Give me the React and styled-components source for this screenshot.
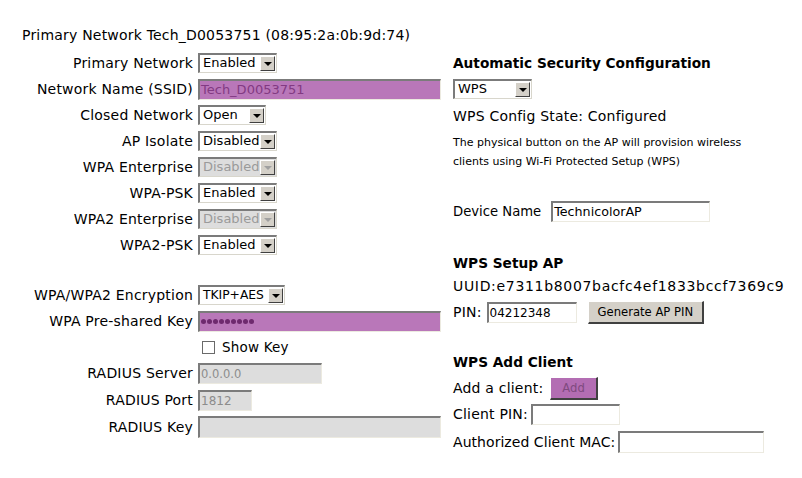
import React from "react";
import styled, { createGlobalStyle } from "styled-components";

const GlobalStyle = createGlobalStyle`
    html, body {
        margin: 0;
        padding: 0;
        background: #ffffff;
    }
    body {
        font-family: "DejaVu Sans", Verdana, sans-serif;
        font-size: 14px;
        letter-spacing: 0.2px;
        color: #000;
    }
`;

const Page = styled.div`
    width: 802px;
    height: 478px;
    display: flex;
    align-items: flex-start;
    padding-top: 22px;
    box-sizing: border-box;
    overflow: hidden;
`;

const LeftCol = styled.div`
    width: 453px;
    flex-shrink: 0;
`;

const Title = styled.div`
    height: 28px;
    line-height: 26px;
    padding-left: 22px;
`;

const FormGrid = styled.div`
    display: grid;
    grid-template-columns: 193px 1fr;
    grid-template-rows: repeat(8, 26px) 24px 26px 26px 26px 26px 28px 26px;
    column-gap: 5px;
`;

const Label = styled.div`
    display: flex;
    align-items: center;
    justify-content: flex-end;
    white-space: nowrap;
`;

const Cell = styled.div`
    display: flex;
    align-items: center;
`;

const Spacer = styled.div`
    grid-column: 1 / span 2;
`;

const SelectBox = styled.div`
    display: inline-flex;
    align-items: stretch;
    width: ${(p) => p.$w}px;
    height: 20px;
    box-sizing: border-box;
    border-style: solid;
    border-width: 2px 1px 1px 2px;
    border-color: #7b7b7b #d8d6cc #d8d6cc #7b7b7b;
    background: ${(p) => (p.$disabled ? "#dddddd" : "#ffffff")};
    color: ${(p) => (p.$disabled ? "#9a9a9a" : "#000000")};
    font-size: ${(p) => p.$fs || 13}px;
    letter-spacing: 0;
`;

const SelectText = styled.span`
    flex: 1;
    padding-left: 3px;
    line-height: 16px;
    white-space: nowrap;
    overflow: hidden;
`;

const Arrow = styled.span`
    width: 15px;
    margin: 1px 1px 1px 0;
    box-sizing: border-box;
    background: #d4d0c8;
    border-style: solid;
    border-width: 1px;
    border-color: #ffffff #404040 #404040 #ffffff;
    display: flex;
    align-items: center;
    justify-content: center;
    &::after {
        content: "";
        border-left: 4px solid transparent;
        border-right: 4px solid transparent;
        border-top: 4px solid ${(p) => (p.$disabled ? "#a0a0a0" : "#000000")};
        margin-top: 1px;
    }
`;

const Select = ({ w, value, disabled, fs }) => (
    <SelectBox $w={w} $disabled={disabled} $fs={fs}>
        <SelectText>{value}</SelectText>
        <Arrow $disabled={disabled} />
    </SelectBox>
);

const Field = styled.div`
    width: ${(p) => p.$w}px;
    height: ${(p) => p.$h || 21}px;
    box-sizing: border-box;
    border-style: solid;
    border-width: 2px 1px 1px 2px;
    border-color: #7b7b7b #eceae0 #eceae0 #7b7b7b;
    background: ${(p) =>
        p.$tone === "purple" ? "#b977b9" : p.$tone === "gray" ? "#dddddd" : "#ffffff"};
    color: ${(p) =>
        p.$tone === "purple" ? "#823a82" : p.$tone === "gray" ? "#8c8c8c" : "#000000"};
    font-size: ${(p) => p.$fs || 12}px;
    letter-spacing: ${(p) => p.$ls || 0}px;
    line-height: ${(p) => (p.$h || 21) - 3}px;
    padding-left: 1px;
    display: flex;
    align-items: center;
    gap: 1px;
    white-space: nowrap;
    overflow: hidden;
`;

const Dot = styled.span`
    width: 5px;
    height: 5px;
    border-radius: 50%;
    background: #6e2a6e;
    flex-shrink: 0;
`;

const CheckWrap = styled.div`
    display: flex;
    align-items: center;
    gap: 7px;
    padding-left: 4px;
    font-size: 13.5px;
`;

const CheckBox = styled.span`
    width: 11px;
    height: 11px;
    border: 1px solid #6a6a6a;
    background: #ffffff;
    display: inline-block;
`;

const RightCol = styled.div`
    display: flex;
    flex-direction: column;
    padding-top: 28px;
`;

const Line = styled.div`
    height: ${(p) => p.$h}px;
    margin-top: ${(p) => p.$mt || 0}px;
    display: flex;
    align-items: center;
    gap: ${(p) => p.$gap || 0}px;
    white-space: nowrap;
    font-size: ${(p) => p.$fs || 14}px;
    letter-spacing: ${(p) => (p.$ls !== undefined ? p.$ls : 0.2)}px;
    font-weight: ${(p) => (p.$bold ? 700 : 400)};
`;

const Button = styled.div`
    height: 23px;
    box-sizing: border-box;
    padding: 0 ${(p) => (p.$purple ? 11 : 9)}px;
    display: flex;
    align-items: center;
    font-size: 11.6px;
    letter-spacing: 0;
    border-style: solid;
    border-width: 1px 2px 2px 1px;
    border-color: #ffffff #404040 #404040 #ffffff;
    background: ${(p) => (p.$purple ? "#b36db3" : "#d4d0c8")};
    color: ${(p) => (p.$purple ? "#7f4a7f" : "#000000")};
    margin-left: ${(p) => p.$ml || 0}px;
`;

const leftRows = [
    { label: "Primary Network", el: <Select w={79} value="Enabled" /> },
    {
        label: "Network Name (SSID)",
        el: (
            <Field $w={243} $tone="purple" $fs={13}>
                Tech_D0053751
            </Field>
        ),
    },
    { label: "Closed Network", el: <Select w={68} value="Open" /> },
    { label: "AP Isolate", el: <Select w={79} value="Disabled" /> },
    { label: "WPA Enterprise", el: <Select w={79} value="Disabled" disabled /> },
    { label: "WPA-PSK", el: <Select w={79} value="Enabled" /> },
    { label: "WPA2 Enterprise", el: <Select w={79} value="Disabled" disabled /> },
    { label: "WPA2-PSK", el: <Select w={79} value="Enabled" /> },
];

const App = () => {
    return (
        <>
            <GlobalStyle />
            <Page>
                <LeftCol>
                    <Title>Primary Network Tech_D0053751 (08:95:2a:0b:9d:74)</Title>
                    <FormGrid>
                        {leftRows.map((r) => (
                            <React.Fragment key={r.label}>
                                <Label>{r.label}</Label>
                                <Cell>{r.el}</Cell>
                            </React.Fragment>
                        ))}
                        <Spacer />
                        <Label>WPA/WPA2 Encryption</Label>
                        <Cell>
                            <Select w={87} value="TKIP+AES" fs={12.3} />
                        </Cell>
                        <Label>WPA Pre-shared Key</Label>
                        <Cell>
                            <Field $w={243} $tone="purple">
                                {Array.from({ length: 9 }).map((_, i) => (
                                    <Dot key={i} />
                                ))}
                            </Field>
                        </Cell>
                        <Label />
                        <Cell>
                            <CheckWrap>
                                <CheckBox />
                                Show Key
                            </CheckWrap>
                        </Cell>
                        <Label>RADIUS Server</Label>
                        <Cell>
                            <Field $w={124} $tone="gray" $fs={11.5}>0.0.0.0</Field>
                        </Cell>
                        <Label>RADIUS Port</Label>
                        <Cell>
                            <Field $w={54} $tone="gray">1812</Field>
                        </Cell>
                        <Label>RADIUS Key</Label>
                        <Cell>
                            <Field $w={243} $tone="gray" $h={22} />
                        </Cell>
                    </FormGrid>
                </LeftCol>
                <RightCol>
                    <Line $h={26} $bold $fs={13.7} $ls={0}>
                        Automatic Security Configuration
                    </Line>
                    <Line $h={26}>
                        <Select w={79} value="WPS" />
                    </Line>
                    <Line $h={28}>WPS Config State: Configured</Line>
                    <Line $h={24} $fs={11} $ls={0}>
                        The physical button on the AP will provision wireless
                    </Line>
                    <Line $h={14} $fs={11} $ls={0}>
                        clients using Wi-Fi Protected Setup (WPS)
                    </Line>
                    <Line $h={26} $mt={30} $gap={10} $fs={13.2} $ls={0}>
                        Device Name
                        <Field $w={159} $fs={12.7}>TechnicolorAP</Field>
                    </Line>
                    <Line $h={26} $mt={26} $bold $fs={13.7} $ls={0}>
                        WPS Setup AP
                    </Line>
                    <Line $h={20} $ls={0.68}>UUID:e7311b8007bacfc4ef1833bccf7369c9</Line>
                    <Line $h={32} $gap={5}>
                        PIN:
                        <Field $w={90}>04212348</Field>
                        <Button $ml={6}>Generate AP PIN</Button>
                    </Line>
                    <Line $h={26} $mt={21} $bold $fs={13.7} $ls={0}>
                        WPS Add Client
                    </Line>
                    <Line $h={26} $gap={7}>
                        Add a client:
                        <Button $purple>Add</Button>
                    </Line>
                    <Line $h={26} $gap={3}>
                        Client PIN:
                        <Field $w={89} />
                    </Line>
                    <Line $h={28} $mt={1} $gap={3} $ls={0.05}>
                        Authorized Client MAC:
                        <Field $w={146} $h={22} />
                    </Line>
                </RightCol>
            </Page>
        </>
    );
};

export default App;
